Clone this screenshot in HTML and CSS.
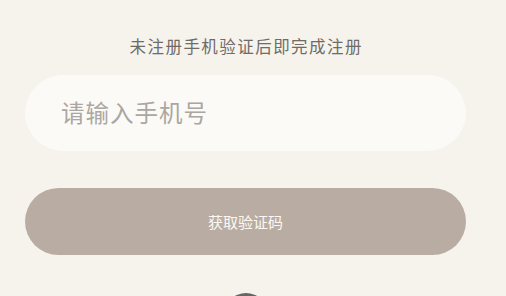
FILE: index.html
```html
<!DOCTYPE html>
<html lang="zh">
<head>
<meta charset="utf-8">
<link rel="stylesheet" href="styles.css">
</head>
<body>
<main class="page">
  <p class="hint">未注册手机验证后即完成注册</p>
  <input class="phone" type="tel" placeholder="请输入手机号">
  <button class="get-code" type="button">获取验证码</button>
  <div class="avatar"></div>
</main>
</body>
</html>
```

FILE: styles.css
```css
html, body {
  margin: 0;
  padding: 0;
  background: #f6f3ed;
  overflow: hidden;
}
body {
  font-family: "Noto Sans CJK SC", "Noto Sans", sans-serif;
  height: 296px;
}
.page {
  width: 441px;
  height: 296px;
  overflow: hidden;
  margin-left: 25px;
  display: flex;
  flex-direction: column;
  align-items: center;
}
.hint {
  margin: 36px 0 0;
  font-size: 16.5px;
  line-height: 20px;
  letter-spacing: 1.45px;
  text-indent: 1.45px;
  color: #6f6b67;
}
.phone {
  box-sizing: border-box;
  margin-top: 19px;
  width: 100%;
  height: 76px;
  flex-shrink: 0;
  border: none;
  outline: none;
  border-radius: 38px;
  background: #fbfaf7;
  padding: 0 0 2px 36px;
  font-family: inherit;
  font-size: 23.5px;
  letter-spacing: 1px;
  color: #333;
}
.phone::placeholder {
  color: #aba6a1;
}
.get-code {
  margin-top: 37px;
  width: 100%;
  height: 67px;
  flex-shrink: 0;
  border: none;
  border-radius: 34px;
  background: #b9ada3;
  color: #fbf8f4;
  font-family: inherit;
  font-size: 15px;
  padding: 0;
}
.avatar {
  margin-top: 38px;
  width: 44px;
  height: 44px;
  flex-shrink: 0;
  border-radius: 50%;
  background: #686664;
}
```
